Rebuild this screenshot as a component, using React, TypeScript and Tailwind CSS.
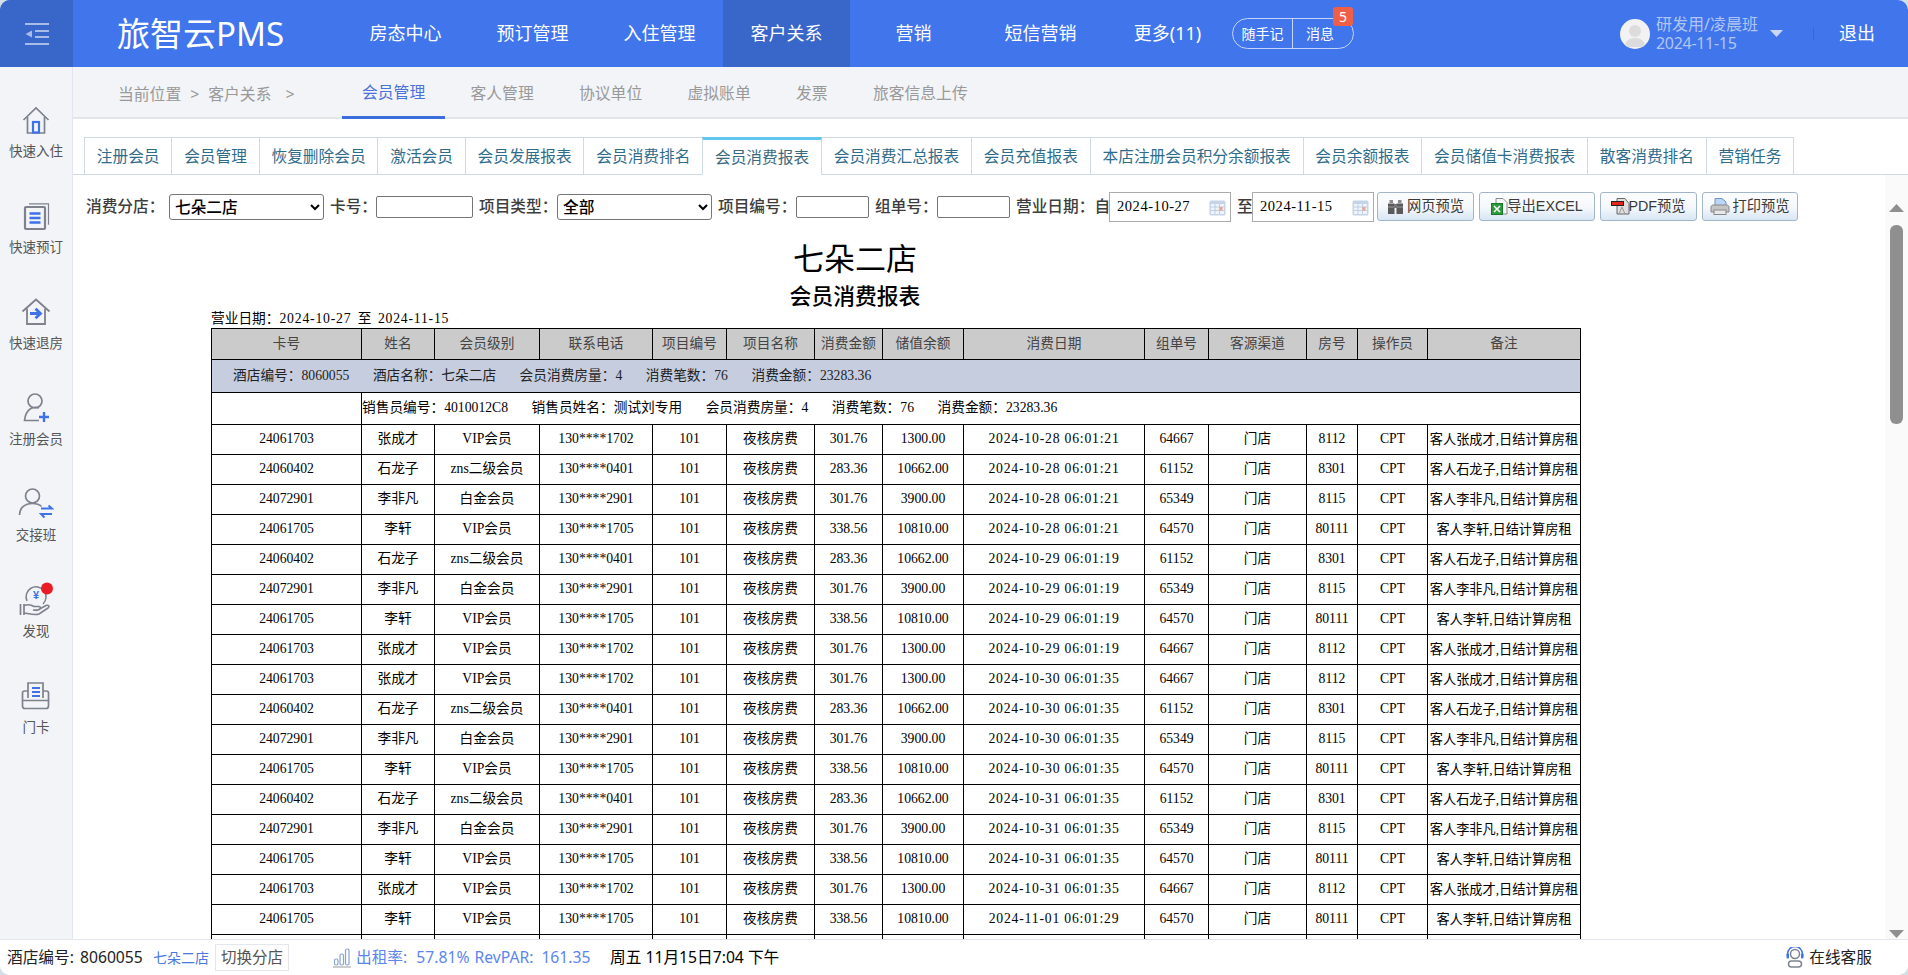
import React from "react";

const navItems = ["房态中心", "预订管理", "入住管理", "客户关系", "营销", "短信营销", "更多(11)"];
const subNav = ["会员管理", "客人管理", "协议单位", "虚拟账单", "发票", "旅客信息上传"];
const tabs = ["注册会员", "会员管理", "恢复删除会员", "激活会员", "会员发展报表", "会员消费排名", "会员消费报表", "会员消费汇总报表", "会员充值报表", "本店注册会员积分余额报表", "会员余额报表", "会员储值卡消费报表", "散客消费排名", "营销任务"];
const cols = [150, 73, 105, 113, 74, 88, 68, 81, 181, 64, 98, 51, 70, 153];
const heads = ["卡号", "姓名", "会员级别", "联系电话", "项目编号", "项目名称", "消费金额", "储值余额", "消费日期", "组单号", "客源渠道", "房号", "操作员", "备注"];

type P = { card: string; name: string; level: string; phone: string; amount: string; balance: string; group: string; room: string };
const Z: P = { card: "24061703", name: "张成才", level: "VIP会员", phone: "130****1702", amount: "301.76", balance: "1300.00", group: "64667", room: "8112" };
const S: P = { card: "24060402", name: "石龙子", level: "zns二级会员", phone: "130****0401", amount: "283.36", balance: "10662.00", group: "61152", room: "8301" };
const L: P = { card: "24072901", name: "李非凡", level: "白金会员", phone: "130****2901", amount: "301.76", balance: "3900.00", group: "65349", room: "8115" };
const X: P = { card: "24061705", name: "李轩", level: "VIP会员", phone: "130****1705", amount: "338.56", balance: "10810.00", group: "64570", room: "80111" };
const rows: [P, string][] = [
  [Z, "2024-10-28 06:01:21"], [S, "2024-10-28 06:01:21"], [L, "2024-10-28 06:01:21"], [X, "2024-10-28 06:01:21"],
  [S, "2024-10-29 06:01:19"], [L, "2024-10-29 06:01:19"], [X, "2024-10-29 06:01:19"], [Z, "2024-10-29 06:01:19"],
  [Z, "2024-10-30 06:01:35"], [S, "2024-10-30 06:01:35"], [L, "2024-10-30 06:01:35"], [X, "2024-10-30 06:01:35"],
  [S, "2024-10-31 06:01:35"], [L, "2024-10-31 06:01:35"], [X, "2024-10-31 06:01:35"], [Z, "2024-10-31 06:01:35"],
  [X, "2024-11-01 06:01:29"],
];

const G = "#7d828c";
const B = "#3f72e6";

function SideIcon({ kind }: { kind: string }) {
  if (kind === "home")
    return (
      <svg width="30" height="30" viewBox="0 0 30 30" fill="none">
        <path d="M2.500 15 15 3l12.500 12" stroke={G} strokeWidth="1.700" />
        <path d="M6.500 12v16h17V12" stroke={G} strokeWidth="1.700" />
        <rect x="12" y="17" width="6" height="10.500" stroke={B} strokeWidth="2.200" />
      </svg>
    );
  if (kind === "doc")
    return (
      <svg width="30" height="30" viewBox="0 0 30 30" fill="none">
        <path d="M8 2.800h19.500v21" stroke={G} strokeWidth="1.200" />
        <rect x="4" y="6" width="20" height="22" rx="1" stroke={G} strokeWidth="2.200" />
        <path d="M8.500 12.500h11M8.500 17h11M8.500 21.500h11" stroke={B} strokeWidth="2.400" />
      </svg>
    );
  if (kind === "exit")
    return (
      <svg width="30" height="30" viewBox="0 0 30 30" fill="none">
        <path d="M1.500 14.500 15 2.500l13.500 12" stroke={G} strokeWidth="1.800" />
        <path d="M6 11.500V27h18V11.500" stroke={G} strokeWidth="1.800" />
        <path d="M9 16.500h10M14.500 11.800l5 4.700-5 4.700" stroke={B} strokeWidth="2.800" />
      </svg>
    );
  if (kind === "user")
    return (
      <svg width="30" height="32" viewBox="0 0 30 32" fill="none">
        <circle cx="14" cy="9" r="7" stroke={G} strokeWidth="1.700" />
        <path d="M18 16c-5-2-13 0-14.500 12.500H18" stroke={G} strokeWidth="1.700" />
        <path d="M23 20v10M18 25h10" stroke={B} strokeWidth="2.400" />
      </svg>
    );
  if (kind === "swap")
    return (
      <svg width="36" height="34" viewBox="0 0 36 34" fill="none">
        <circle cx="14.500" cy="9" r="7" stroke={G} strokeWidth="1.700" />
        <path d="M1.500 28c0-7 5-11.500 13-11.500 4 0 7 1 9 3" stroke={G} strokeWidth="1.700" />
        <path d="M23 21.500h11l-3.500-3M34 27H23l3.500 3.500" stroke={B} strokeWidth="1.900" />
      </svg>
    );
  if (kind === "coin")
    return (
      <svg width="36" height="36" viewBox="0 0 36 36" fill="none">
        <path d="M9 19a10 10 0 1 1 16 3" stroke={G} strokeWidth="1.500" />
        <text x="18" y="17" textAnchor="middle" fontSize="11" fontWeight="700" fill={B} fontFamily="'Liberation Sans',sans-serif">¥</text>
        <path d="M2.500 22v11M6 22v11" stroke={G} strokeWidth="1.700" />
        <path d="M6 23.500c5-1.500 7-1 10 1h5c2 0 2 3.500-1 3.500h-5l4 .5 9-5c2.500-1 4 1 2 2.500l-9 6c-4 1.500-11-.5-15-1" stroke={G} strokeWidth="1.600" />
        <circle cx="29" cy="6.500" r="6" fill="#ea1c24" />
      </svg>
    );
  return (
    <svg width="30" height="30" viewBox="0 0 30 30" fill="none">
      <path d="M7 17V2h15v15" stroke={G} strokeWidth="1.700" />
      <path d="M11 7h8M11 11h8M11 15h8" stroke={B} strokeWidth="1.800" />
      <path d="M7 10H3.500c-1 0-2 .8-2 2v13c0 1.500 1 2.500 2.500 2.500h21c1.500 0 2.500-1 2.500-2.500V12c0-1.200-1-2-2-2H22M1.500 19.500h27" stroke={G} strokeWidth="1.700" />
    </svg>
  );
}

function Calendar() {
  return (
    <svg width="17" height="16" viewBox="0 0 17 16" className="absolute right-[4px] top-[7px]">
      <rect x="0.500" y="0.500" width="16" height="15" rx="1.500" fill="#c5d4e8" />
      <rect x="2" y="4" width="13" height="10" fill="#f0f4fa" />
      <path d="M2 7h13M2 10.500h13M6 4v10M10.500 4v10" stroke="#b4c6dc" strokeWidth="0.800" />
      <rect x="10.500" y="7" width="3" height="3.500" fill="#eda58f" />
    </svg>
  );
}

function Field({ w }: { w: string }) {
  return <input className={`h-[22px] ${w} rounded-[2px] border border-[#767676] bg-white`} />;
}

function DateBox({ value, w }: { value: string; w: string }) {
  return (
    <div className={`relative flex h-[30px] ${w} items-center border border-[#ababab] bg-white pl-[7px] font-['Liberation_Serif',serif] text-[14.500px] tracking-[0.550px] text-black`}>
      {value}
      <Calendar />
    </div>
  );
}

function Select({ value, w }: { value: string; w: string }) {
  return (
    <select defaultValue={value} className={`h-[26px] ${w} rounded-[3px] border border-[#767676] bg-white pl-[1px] text-[15.700px] text-black`}>
      <option>{value}</option>
    </select>
  );
}

function ToolButton({ w, icon, children }: { w: string; icon: React.ReactNode; children: React.ReactNode }) {
  return (
    <div className={`flex h-[29px] ${w} items-center justify-center rounded-[3px] border border-[#a3b6c8] bg-gradient-to-b from-[#fbfcfe] via-[#f6f9fc] to-[#d8e6f4] font-['Liberation_Sans','Noto_Sans_CJK_SC',sans-serif] text-[14.300px] text-[#3a3a3a]`}>
      {icon}
      {children}
    </div>
  );
}

const Spans = ({ items }: { items: [string, string][] }) => (
  <div className="flex gap-[23.500px] whitespace-nowrap">
    {items.map(([k, v]) => (
      <span key={k}>
        {k}：{v}
      </span>
    ))}
  </div>
);

export default function App() {
  return (
    <div className="h-[975px] w-[1908px] overflow-hidden bg-[#d3dee6]">
      <div className="flex h-full w-full flex-col overflow-hidden rounded-[10px] bg-white font-['Noto_Sans','Noto_Sans_CJK_SC',sans-serif]">
        {/* Header */}
        <header className="flex h-[67px] shrink-0 items-center bg-[#4075ec] text-white">
          <div className="flex h-full w-[73px] items-center justify-center bg-[#3866c9]">
            <svg width="26" height="24" viewBox="0 0 26 24" fill="none" stroke="#a9bce8" strokeWidth="2.200">
              <path d="M1 2h24M11 9h14M11 15h14M1 22h24" />
              <path d="M8 8.500v7L1.500 12z" fill="#a9bce8" stroke="none" />
            </svg>
          </div>
          <div className="ml-[44px] w-[225px] whitespace-nowrap text-[33px] leading-none">旅智云PMS</div>
          <nav className="flex h-full">
            {navItems.map((n) => (
              <div key={n} className={`flex h-full w-[127px] items-center justify-center text-[18px] ${n === "客户关系" ? "bg-[#3866c9]" : ""}`}>
                {n}
              </div>
            ))}
          </nav>
          <div className="relative ml-[1px] flex h-[31px] w-[122px] items-center rounded-full border border-[#c4d4f6] text-[14px]">
            <div className="flex h-full w-[60px] items-center justify-center border-r border-[#c4d4f6]">随手记</div>
            <div className="flex h-full flex-1 items-center justify-center pr-[6px]">消息</div>
            <div className="absolute left-[100px] top-[-12px] flex h-[19px] w-[20px] items-center justify-center rounded-[3px] bg-[#ef5f48] text-[14px]">5</div>
          </div>
          <div className="ml-[266px] flex h-[30px] w-[30px] items-center justify-center overflow-hidden rounded-full bg-[#f2f2f2]">
            <svg width="30" height="30" viewBox="0 0 30 30">
              <circle cx="15" cy="12" r="6" fill="#dcdcdc" />
              <path d="M5 28c0-7 5-9 10-9s10 2 10 9z" fill="#dcdcdc" />
            </svg>
          </div>
          <div className="ml-[6px] w-[114px] text-[16px] leading-[19px] text-[#b2c5f2]">
            <div className="whitespace-nowrap">研发用/凌晨班</div>
            <div className="tracking-[-0.300px]">2024-11-15</div>
          </div>
          <svg width="13" height="7" viewBox="0 0 13 7">
            <path d="M0 0h13L6.500 7z" fill="#c9d6f6" />
          </svg>
          <div className="ml-[30px] h-[12px] w-px bg-[#3866c9]" />
          <div className="ml-[25px] text-[18px]">退出</div>
        </header>

        <div className="flex min-h-0 flex-1">
          {/* Sidebar */}
          <aside className="flex w-[73px] shrink-0 flex-col items-center border-r border-[#e3e6f0] bg-[#f2f4f8] pt-[35px] text-[13.500px] text-[#555]">
            {[
              ["home", "快速入住"],
              ["doc", "快速预订"],
              ["exit", "快速退房"],
              ["user", "注册会员"],
              ["swap", "交接班"],
              ["coin", "发现"],
              ["card", "门卡"],
            ].map(([k, t]) => (
              <div key={k} className="flex h-[96px] flex-col items-center">
                <div className="flex h-[36px] items-center justify-center">
                  <SideIcon kind={k} />
                </div>
                <div className="mt-[3px] leading-[20px]">{t}</div>
              </div>
            ))}
          </aside>

          <main className="flex min-w-0 flex-1 flex-col">
            {/* Sub nav */}
            <div className="flex h-[52px] shrink-0 items-stretch border-b-2 border-[#e2e5ea] bg-[#f2f4f8] text-[15.800px] text-[#999]">
              <div className="ml-[45px] flex w-[224px] items-center gap-[9px] pt-[6px]">
                <span>当前位置</span>
                <span>&gt;</span>
                <span>客户关系</span>
                <span className="ml-[5px]">&gt;</span>
              </div>
              <div className="flex gap-[5.300px]">
                {subNav.map((n, i) => (
                  <div key={n} className={`mb-[-2px] flex items-center whitespace-nowrap px-[20px] ${i === 0 ? "border-b-[3px] border-[#3b6ddb] pt-[3px] text-[#4a72d8]" : "pt-[1px]"}`}>
                    {n}
                  </div>
                ))}
              </div>
            </div>

            {/* Tabs */}
            <div className="mt-[18px] flex h-[38px] shrink-0 border-b border-[#cfd9e0] pl-[11px] text-[15.700px] text-[#2f6c8c]">
              {tabs.map((t, i) => (
                <div
                  key={t}
                  className={`mb-[-1px] flex h-[38px] items-center whitespace-nowrap border-r border-[#cfd9e0] px-[11.800px] ${i === 0 ? "border-l" : ""} ${
                    i === 6 ? "ml-[-1px] border-l border-t-[3px] border-b-0 border-l-[#cfd9e0] border-t-[#62c6f0] bg-white pt-[1px] text-[#3b6a80]" : "border-t"
                  }`}
                >
                  {t}
                </div>
              ))}
            </div>

            <div className="flex min-h-0 flex-1">
              <div className="min-w-0 flex-1 overflow-hidden">
                {/* Filter */}
                <div className="ml-[13px] mt-[17px] flex h-[30px] items-center whitespace-nowrap text-[15.700px] font-medium text-[#3d3d3d]">
                  <span className="w-[83px]">消费分店：</span>
                  <Select value="七朵二店" w="w-[155px]" />
                  <span className="ml-[6px] w-[46px]">卡号：</span>
                  <Field w="w-[97px]" />
                  <span className="ml-[6px] w-[78px]">项目类型：</span>
                  <Select value="全部" w="w-[155px]" />
                  <span className="ml-[6px] w-[78px]">项目编号：</span>
                  <Field w="w-[73px]" />
                  <span className="ml-[6px] w-[62px]">组单号：</span>
                  <Field w="w-[73px]" />
                  <span className="ml-[6px] w-[93px]">营业日期：自</span>
                  <DateBox value="2024-10-27" w="w-[122px]" />
                  <span className="ml-[6px] w-[15px]">至</span>
                  <DateBox value="2024-11-15" w="w-[122px]" />
                  <div className="ml-[3px] flex items-center gap-[5px] self-start font-normal">
                    <ToolButton
                      w="w-[97px]"
                      icon={
                        <svg width="17" height="15" viewBox="0 0 17 15" className="mr-[3px]">
                          <path d="M2.500 4V1h3.500v3zM11 4V1h3.500v3z" fill="#8a8a8a" />
                          <path d="M1 4.500h6.500V15H1zM9.500 4.500H16V15H9.500z" fill="#5a5a5a" />
                          <path d="M1 8h6.500M9.500 8H16" stroke="#999" />
                          <rect x="7" y="5" width="3" height="4" fill="#777" />
                        </svg>
                      }
                    >
                      网页预览
                    </ToolButton>
                    <ToolButton
                      w="w-[116px]"
                      icon={
                        <svg width="17" height="17" viewBox="0 0 17 17" className="mr-[-1px]">
                          <path d="M5 .5h7l4 4V16H5z" fill="#f4f6f8" stroke="#888" />
                          <rect x="0.500" y="5.500" width="11" height="11" fill="#2f9a3c" stroke="#167a28" />
                          <path d="M3 8l6 6M9 8l-6 6" stroke="#fff" strokeWidth="1.500" />
                        </svg>
                      }
                    >
                      导出EXCEL
                    </ToolButton>
                    <ToolButton
                      w="w-[97px]"
                      icon={
                        <svg width="19" height="17" viewBox="0 0 19 17" className="mr-[-2px]">
                          <path d="M6 .5h8l4 5V16H6z" fill="#e0e0e0" stroke="#666" />
                          <rect x="0.500" y="3.500" width="12" height="4" fill="#e2261a" stroke="#222" />
                          <path d="M8 16l3-7 3 7" fill="none" stroke="#999" />
                        </svg>
                      }
                    >
                      PDF预览
                    </ToolButton>
                    <ToolButton
                      w="w-[96px]"
                      icon={
                        <svg width="20" height="17" viewBox="0 0 20 17" className="mr-[2px]">
                          <path d="M5 .5h7l4 3.500V9H5z" fill="#bcd4f6" stroke="#6f93c8" />
                          <path d="M1 9c0-1 1-2 2-2h14c1 0 2 1 2 2v5H1z" fill="#c4c4c4" stroke="#888" />
                          <rect x="4" y="12" width="12" height="4.500" fill="#e8e8e8" stroke="#888" />
                        </svg>
                      }
                    >
                      打印预览
                    </ToolButton>
                  </div>
                </div>

                {/* Report */}
                <div className="font-['Liberation_Serif','Noto_Sans_CJK_SC',serif] text-black">
                  <div className="ml-[138px] mt-[15px] w-[1288px] text-center font-['Noto_Sans_CJK_SC',sans-serif] text-[31px] leading-[40px]">七朵二店</div>
                  <div className="ml-[138px] mt-[3px] w-[1288px] text-center font-['Noto_Sans_CJK_SC',sans-serif] text-[21.800px] font-medium leading-[30px]">会员消费报表</div>
                  <div className="ml-[138px] h-[18px] whitespace-nowrap text-[13.700px] leading-[18px]">
                    营业日期：<span className="tracking-[0.800px]">2024-10-27</span>
                    <span className="mx-[3px]"> 至 </span>
                    <span className="tracking-[0.800px]">2024-11-15</span>
                  </div>
                  <table className="ml-[138px] w-[1369px] table-fixed border-collapse border border-black text-center text-[13.700px]">
                    <colgroup>
                      {cols.map((c, i) => (
                        <col key={i} style={{ width: c }} />
                      ))}
                    </colgroup>
                    <thead>
                      <tr className="h-[31px] bg-[#cbcbcb] text-[#444]">
                        {heads.map((h) => (
                          <th key={h} className="border border-black font-normal">
                            {h}
                          </th>
                        ))}
                      </tr>
                    </thead>
                    <tbody>
                      <tr className="h-[33px] bg-[#c6cddf] text-[#222]">
                        <td colSpan={14} className="border border-black pl-[21px] text-left">
                          <Spans
                            items={[
                              ["酒店编号", "8060055"],
                              ["酒店名称", "七朵二店"],
                              ["会员消费房量", "4"],
                              ["消费笔数", "76"],
                              ["消费金额", "23283.36"],
                            ]}
                          />
                        </td>
                      </tr>
                      <tr className="h-[32px]">
                        <td className="border border-black" />
                        <td colSpan={13} className="border border-black text-left">
                          <Spans
                            items={[
                              ["销售员编号", "4010012C8"],
                              ["销售员姓名", "测试刘专用"],
                              ["会员消费房量", "4"],
                              ["消费笔数", "76"],
                              ["消费金额", "23283.36"],
                            ]}
                          />
                        </td>
                      </tr>
                      {rows.map(([p, d], i) => (
                        <tr key={i} className="h-[30px] whitespace-nowrap">
                          <td className="border border-black">{p.card}</td>
                          <td className="border border-black">{p.name}</td>
                          <td className="border border-black">{p.level}</td>
                          <td className="border border-black">{p.phone}</td>
                          <td className="border border-black">101</td>
                          <td className="border border-black">夜核房费</td>
                          <td className="border border-black">{p.amount}</td>
                          <td className="border border-black">{p.balance}</td>
                          <td className="border border-black tracking-[0.800px]">{d}</td>
                          <td className="border border-black">{p.group}</td>
                          <td className="border border-black">门店</td>
                          <td className="border border-black">{p.room}</td>
                          <td className="border border-black">CPT</td>
                          <td className="border border-black text-[13.200px]">客人{p.name},日结计算房租</td>
                        </tr>
                      ))}
                      <tr className="h-[30px]">
                        {cols.map((_, i) => (
                          <td key={i} className="border border-black" />
                        ))}
                      </tr>
                    </tbody>
                  </table>
                </div>
              </div>

              {/* Scrollbar */}
              <div className="relative flex w-[23px] shrink-0 flex-col items-center bg-[#fafafa]">
                <svg width="15" height="8" viewBox="0 0 15 8" className="mt-[29px]">
                  <path d="M7.500 0 15 8H0z" fill="#8f8f8f" />
                </svg>
                <div className="mt-[13px] h-[199px] w-[13px] rounded-[6px] bg-[#8f8f8f]" />
                <svg width="15" height="8" viewBox="0 0 15 8" className="absolute bottom-[1px]">
                  <path d="M7.500 8 15 0H0z" fill="#8f8f8f" />
                </svg>
              </div>
            </div>
          </main>
        </div>

        {/* Status bar */}
        <footer className="flex h-[36px] shrink-0 items-center border-t border-[#e4e6ee] bg-white pl-[7px] text-[15.700px] text-[#222]">
          <div className="flex w-[138px] gap-[6px] whitespace-nowrap">
            <span>酒店编号:</span>
            <span>8060055</span>
          </div>
          <span className="ml-[8px] text-[14px] text-[#4a78e0]">七朵二店</span>
          <span className="ml-[6px] flex h-[27px] w-[74px] items-center justify-center border border-[#e3e6ea] text-[15.500px] text-[#555]">切换分店</span>
          <svg width="18" height="20" viewBox="0 0 18 20" fill="none" stroke="#8aa4cf" strokeWidth="1.200" className="ml-[44px]">
            <rect x="1.500" y="11" width="3.500" height="6" rx="1.500" />
            <rect x="7" y="6" width="3.500" height="11" rx="1.500" />
            <rect x="12.500" y="1" width="3.500" height="16" rx="1.500" />
            <path d="M0 19h18" stroke="#aaa" />
          </svg>
          <div className="ml-[5px] flex w-[235px] whitespace-nowrap text-[#5b86ee]">
            <span>出租率:</span>
            <span className="ml-[9px]">57.81%</span>
            <span className="ml-[5px]">RevPAR:</span>
            <span className="ml-[8px]">161.35</span>
          </div>
          <span className="ml-[19px] whitespace-nowrap text-black">周五 11月15日7:04 下午</span>
          <svg width="18" height="21" viewBox="0 0 18 21" fill="none" className="ml-auto">
            <circle cx="9" cy="7" r="4.500" stroke={G} strokeWidth="1.500" />
            <path d="M1.500 9V7a7.500 7.500 0 0 1 15 0v2" stroke={B} strokeWidth="1.500" />
            <rect x="0.500" y="6.500" width="2.500" height="5" rx="1" fill={B} />
            <rect x="15" y="6.500" width="2.500" height="5" rx="1" fill={B} />
            <rect x="2.500" y="14" width="13" height="6" rx="3" stroke={G} strokeWidth="1.500" />
          </svg>
          <span className="ml-[5px] mr-[36px] whitespace-nowrap">在线客服</span>
        </footer>
      </div>
    </div>
  );
}
